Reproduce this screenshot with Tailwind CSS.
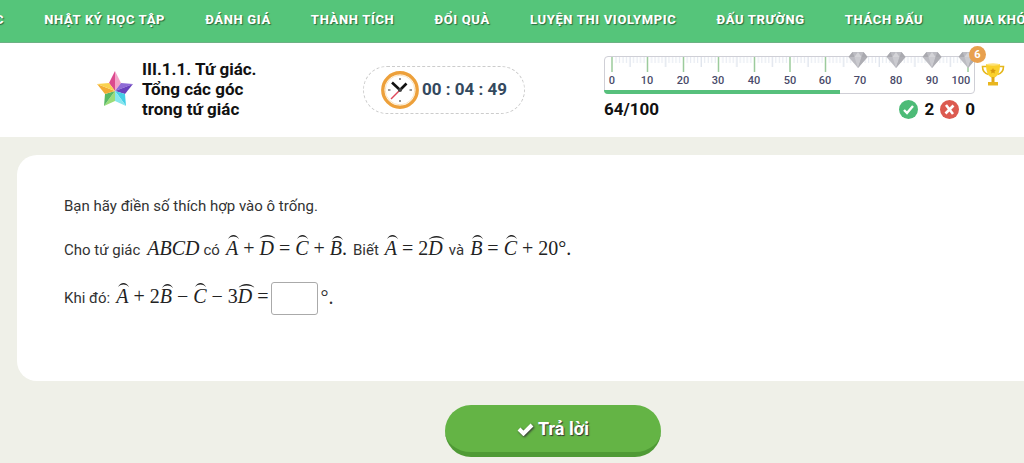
<!DOCTYPE html>
<html lang="vi">
<head>
  <meta charset="UTF-8" />
  <meta name="viewport" content="width=device-width, initial-scale=1" />
  <title>III.1.1. Tứ giác. Tổng các góc trong tứ giác</title>
  <script src="https://cdn.jsdelivr.net/npm/@tailwindcss/browser@4"></script>
</head>
<body class="bg-[#eff0e8] font-['Roboto',sans-serif] text-[#333] overflow-x-hidden">

  <!-- Menu -->
  <nav class="overflow-hidden bg-[#55c57a] border-b border-[#6cb184]">
    <div class="flex items-center gap-10 h-[42px] -ml-[5px] pb-[3px] text-[13px] font-extrabold tracking-wider text-white whitespace-nowrap [text-shadow:1px_1px_1px_#2c6b40]">
      <a href="#">C</a>
      <a href="#">NHẬT KÝ HỌC TẬP</a>
      <a href="#">ĐÁNH GIÁ</a>
      <a href="#">THÀNH TÍCH</a>
      <a href="#">ĐỔI QUÀ</a>
      <a href="#">LUYỆN THI VIOLYMPIC</a>
      <a href="#">ĐẤU TRƯỜNG</a>
      <a href="#">THÁCH ĐẤU</a>
      <a href="#">MUA KHÓ</a>
    </div>
  </nav>

  <!-- Bài học, thời gian, điểm -->
  <header class="flex items-start bg-white h-[94px] pl-24 pr-4">
    <div class="flex items-center gap-2 pt-4 shrink-0">
      <svg class="w-[38px] h-[38px]" viewBox="0 0 38 38">
        <path d="M19 1l-6 12L19 21z" fill="#dc4a8e"/>
        <path d="M19 1l6 12L19 21z" fill="#f3a3c8"/>
        <path d="M37 14l-12-1L19 21z" fill="#8f6ad6"/>
        <path d="M37 14l-8 10L19 21z" fill="#6a42bd"/>
        <path d="M30 36l-1-12L19 21z" fill="#45cfe6"/>
        <path d="M30 36l-11-5V21z" fill="#86e6ee"/>
        <path d="M8 36l11-5V21z" fill="#9bdc78"/>
        <path d="M8 36l1-12L19 21z" fill="#58b964"/>
        <path d="M1 14l8 10L19 21z" fill="#f3ac35"/>
        <path d="M1 14l12-1L19 21z" fill="#fad250"/>
      </svg>
      <h1 class="w-[124px] text-[17px] leading-5 font-bold text-[#111]">III.1.1. Tứ giác. Tổng các góc trong tứ giác</h1>
    </div>

    <div class="flex items-center gap-[3px] mt-[23px] ml-[97px] w-[162px] h-12 pl-[17px] shrink-0 rounded-3xl border border-dashed border-[#ccc]">
      <svg class="w-[38px] h-[38px] shrink-0" viewBox="0 0 38 38" fill="none">
        <circle cx="19" cy="19" r="17.200" fill="#fff" stroke="#eda03a" stroke-width="3.400"/>
        <circle cx="19" cy="19" r="14.800" stroke="#fae3bd"/>
        <path d="M19 7v2M19 29v2M7 19h2.500M28.500 19H31" stroke="#777" stroke-width="1.600"/>
        <path d="M19 19l-9 9" stroke="#e0485a" stroke-width="1.500"/>
        <path d="M19 19l-8-7.500" stroke="#111" stroke-width="2.600"/>
        <path d="M19 19l6.500-6.500" stroke="#111" stroke-width="2.600"/>
        <circle cx="19" cy="19" r="2" fill="#444"/>
      </svg>
      <span class="text-[17px] font-bold text-[#34495e] whitespace-nowrap">00 : 04 : 49</span>
    </div>

    <div class="ml-[79px] mt-[13px] w-[371px] shrink-0">
      <!-- Thước điểm -->
      <div class="relative h-[38px] rounded-[4px] border border-[#cfcfd6]">
        <svg class="absolute -left-px -top-px w-[371px] h-[38px] overflow-visible" viewBox="0 0 371 38">
          <defs>
            <g id="kimcuong">
              <path d="M-5.500-5H5.500L9.500 0 0 11-9.500 0z" fill="#bcbcc2"/>
              <path d="M-5.500-5L-3.500 0H-9.500zM5.500-5L3.500 0H9.500z" fill="#a9a9af"/>
              <path d="M-3.500 0H3.500L0 11z" fill="#cbcbd0"/>
              <path d="M-3.500 0L0-5 3.500 0z" fill="#d4d4d8"/>
              <path d="M3.500 0H9.500L0 11z" fill="#aeaeb4"/>
            </g>
            <pattern id="vach" x="8" width="35.600" height="14" patternUnits="userSpaceOnUse">
              <path d="M4 1v6M7.500 1v6M11 1v6M14.500 1v6M21.500 1v6M25 1v6M28.500 1v6M32 1v6" stroke="#e3e8f0"/>
              <path d="M18 1v10" stroke="#d3dae6"/>
            </pattern>
          </defs>
          <rect x="8" y="0" width="356" height="14" fill="url(#vach)"/>
          <path d="M8 1v15M43.500 1v15M79.500 1v15M114.500 1v15M150.500 1v15M186 1v15M221.500 1v15M364 1v15" stroke="#9ccb9c" stroke-width="1.500"/>
          <use href="#kimcuong" x="254" y="1"/>
          <use href="#kimcuong" x="292" y="1"/>
          <use href="#kimcuong" x="328" y="1"/>
          <use href="#kimcuong" x="364" y="1"/>
          <g font-size="11" font-weight="500" fill="#4a4a6a" text-anchor="middle">
            <text x="8" y="28">0</text>
            <text x="43" y="28">10</text>
            <text x="79" y="28">20</text>
            <text x="114" y="28">30</text>
            <text x="150" y="28">40</text>
            <text x="186" y="28">50</text>
            <text x="221" y="28">60</text>
            <text x="256" y="28">70</text>
            <text x="292" y="28">80</text>
            <text x="328" y="28">90</text>
            <text x="357" y="28">100</text>
          </g>
        </svg>
        <div class="absolute -left-px -bottom-px h-1 bg-[#57c07c] rounded-bl-[4px]" style="width: 64%"></div>
        <span class="absolute -right-[12px] -top-[11px] w-[17px] h-[17px] rounded-full bg-[#e8a04e] text-white text-[11px] leading-[17px] font-bold text-center">6</span>
      </div>

      <div class="flex items-center justify-between mt-[3px] text-[17px] leading-6 font-bold text-[#111]">
        <span>64/100</span>
        <div class="flex items-center gap-[6px]">
          <svg class="w-[19px] h-[19px]" viewBox="0 0 19 19" fill="none">
            <circle cx="9.500" cy="9.500" r="9.500" fill="#4dbb77"/>
            <path d="M5 10l3 3 6-7" stroke="#fff" stroke-width="2.400"/>
          </svg>
          <span>2</span>
          <svg class="w-[19px] h-[19px]" viewBox="0 0 19 19" fill="none">
            <circle cx="9.500" cy="9.500" r="9.500" fill="#dc5a50"/>
            <path d="M6 5l7 9M13.500 5.500l-8 8" stroke="#fff" stroke-width="2.600"/>
          </svg>
          <span>0</span>
        </div>
      </div>
    </div>

    <!-- Cúp -->
    <svg class="w-6 h-[23px] mt-5 ml-[6px] shrink-0" viewBox="0 0 24 23" fill="none">
      <path d="M6 3.500H1.500c0 4 2 7 6 8M18 3.500h4.500c0 4-2 7-6 8" stroke="#e5b71c" stroke-width="1.600"/>
      <path d="M5 1h14c0 8-2 13-7 14-5-1-7-6-7-14z" fill="#fad02c"/>
      <path d="M10.500 14h3v5h-3z" fill="#e0a818"/>
      <path d="M7 19h10v3.500H7z" fill="#e9b61e"/>
      <ellipse cx="12" cy="1.500" rx="7" ry="1.200" fill="#fde27a"/>
      <path d="M12 5l.9 1.800 2 .3-1.400 1.400.3 2L12 9.600l-1.800.9.300-2L9.100 7.100l2-.3z" fill="#d89a10"/>
    </svg>
  </header>

  <!-- Câu hỏi -->
  <main class="w-[108%]">
    <svg class="hidden">
      <symbol id="mu" viewBox="0 0 16 5" preserveAspectRatio="none">
        <path d="M0 5C2 2 5 0 8 0s6 2 8 5C13 3 11 2 8 2S3 3 0 5z" fill="#222"/>
      </symbol>
    </svg>
    <section class="mx-[17px] mt-[18px] rounded-[20px] bg-white px-[47px] pt-[39px] pb-[66px] text-[15px] leading-6 whitespace-nowrap">
      <p>Bạn hãy điền số thích hợp vào ô trống.</p>

      <p class="flex items-baseline mt-[18px]">
        <span>Cho tứ giác</span>
        <i class="ml-[7px] mr-1 font-['Liberation_Serif',serif] text-[20px] text-[#222]">ABCD</i>
        <span>có</span>
        <span class="flex items-baseline gap-[5px] ml-[6px] font-['Liberation_Serif',serif] text-[20px] text-[#222]">
          <i class="relative">A<svg class="absolute left-[2px] -top-px w-[11px] h-1"><use href="#mu"/></svg></i>
          <span>+</span>
          <i class="relative">D<svg class="absolute left-0 -top-px w-[17px] h-1"><use href="#mu"/></svg></i>
          <span>=</span>
          <i class="relative">C<svg class="absolute left-[2px] -top-px w-[11px] h-1"><use href="#mu"/></svg></i>
          <span>+</span>
          <span><i class="relative">B<svg class="absolute left-[2px] -top-px w-[11px] h-1"><use href="#mu"/></svg></i>.</span>
        </span>
        <span class="ml-[6px]">Biết</span>
        <span class="flex items-baseline gap-[5px] ml-[6px] font-['Liberation_Serif',serif] text-[20px] text-[#222]">
          <i class="relative">A<svg class="absolute left-[2px] -top-px w-[11px] h-1"><use href="#mu"/></svg></i>
          <span>=</span>
          <span>2<i class="relative">D<svg class="absolute left-0 -top-px w-[17px] h-1"><use href="#mu"/></svg></i></span>
        </span>
        <span class="ml-[6px]">và</span>
        <span class="flex items-baseline gap-[5px] ml-[6px] font-['Liberation_Serif',serif] text-[20px] text-[#222]">
          <i class="relative">B<svg class="absolute left-[2px] -top-px w-[11px] h-1"><use href="#mu"/></svg></i>
          <span>=</span>
          <i class="relative">C<svg class="absolute left-[2px] -top-px w-[11px] h-1"><use href="#mu"/></svg></i>
          <span>+</span>
          <span>20°.</span>
        </span>
      </p>

      <div class="flex items-center mt-5">
        <label for="dapan" class="flex items-baseline pb-1">
          <span>Khi đó:</span>
          <span class="flex items-baseline gap-[5px] ml-[6px] font-['Liberation_Serif',serif] text-[20px] text-[#222]">
            <i class="relative">A<svg class="absolute left-[2px] -top-px w-[11px] h-1"><use href="#mu"/></svg></i>
            <span>+</span>
            <span>2<i class="relative">B<svg class="absolute left-[2px] -top-px w-[11px] h-1"><use href="#mu"/></svg></i></span>
            <span>−</span>
            <i class="relative">C<svg class="absolute left-[2px] -top-px w-[11px] h-1"><use href="#mu"/></svg></i>
            <span>−</span>
            <span>3<i class="relative">D<svg class="absolute left-0 -top-px w-[17px] h-1"><use href="#mu"/></svg></i></span>
            <span>=</span>
          </span>
        </label>
        <input id="dapan" type="text" class="ml-[2px] w-[47px] h-[33px] rounded-[3px] border border-[#aaa] bg-white text-center outline-none" />
        <span class="ml-[3px] pb-1 font-['Liberation_Serif',serif] text-[20px]">°.</span>
      </div>
    </section>

    <div class="flex justify-center mt-6">
      <button type="button" class="flex items-center justify-center gap-1 w-[216px] h-[52px] rounded-[26px] border-b-[5px] border-[#4f9a35] bg-[#64b445] text-[18px] font-bold text-white [text-shadow:1px_1px_1px_#333]">
        <svg class="w-[17px] h-[14px] drop-shadow-[1px_1px_1px_#333]" viewBox="0 0 17 14" fill="none">
          <path d="M2 7l4.500 4.500L15 3" stroke="#fff" stroke-width="4"/>
        </svg>
        Trả lời
      </button>
    </div>
  </main>
</body>
</html>
